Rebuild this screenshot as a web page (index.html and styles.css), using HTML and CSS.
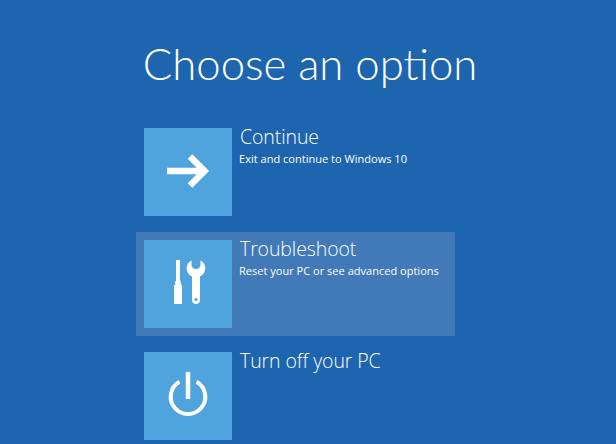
FILE: index.html
```html
<!DOCTYPE html>
<html lang="en">
<head>
<meta charset="utf-8">
<title>Choose an option</title>
<link rel="stylesheet" href="styles.css">
</head>
<body>
<main class="screen">
  <h1 class="heading">Choose an option</h1>
  <ul class="options">
    <li class="option">
      <span class="tile">
        <svg class="icon" viewBox="0 0 44 44" aria-hidden="true"><path d="M1 21H36M24 6.500L38.500 21L24 35.500" fill="none" stroke="#fff" stroke-width="6.500"/></svg>
      </span>
      <div class="text">
        <h2 class="name">Continue</h2>
        <p class="desc">Exit and continue to Windows 10</p>
      </div>
    </li>
    <li class="option option-active">
      <span class="tile">
        <svg class="icon" viewBox="0 2 44 44" aria-hidden="true"><path fill="#fff" d="M10 0H14V21H14.800V25H16V44H8V25H9.200V21H10Z"/><path fill="#fff" fill-rule="evenodd" d="M25.500 0.500V5C25.500 7 27.500 9 30 9C32.500 9 34.500 7 34.500 5V0.500C37.500 2 39.300 4.800 39.300 8C39.300 12 37 15 34 16.500V40C34 42.500 32.200 44 30 44C27.800 44 26 42.500 26 40V16.500C23 15 20.700 12 20.700 8C20.700 4.800 22.500 2 25.500 0.500ZM30 37.900A1.600 1.600 0 1 0 30 41.100A1.600 1.600 0 1 0 30 37.900Z"/></svg>
      </span>
      <div class="text">
        <h2 class="name">Troubleshoot</h2>
        <p class="desc">Reset your PC or see advanced options</p>
      </div>
    </li>
    <li class="option">
      <span class="tile">
        <svg class="icon" viewBox="0 2 44 44" aria-hidden="true"><path d="M22 0V27" fill="none" stroke="#fff" stroke-width="4.500"/><path d="M13.500 9.700A17.300 17.300 0 1 0 30.500 9.700" fill="none" stroke="#fff" stroke-width="4"/></svg>
      </span>
      <div class="text">
        <h2 class="name">Turn off your PC</h2>
      </div>
    </li>
  </ul>
</main>
</body>
</html>
```
FILE: styles.css
```css
html, body {
  margin: 0;
  height: 100%;
  overflow: hidden;
}

body {
  background: #1e65b0;
  color: #fff;
  font-family: "Open Sans", "Liberation Sans", sans-serif;
}

.screen {
  display: flex;
  flex-direction: column;
  align-items: center;
  height: 444px;
}

.heading {
  margin: 0 0 0 4px;
  padding-top: 33px;
  height: 120px;
  box-sizing: border-box;
  flex-shrink: 0;
  font-family: "Lato", "Open Sans", sans-serif;
  font-size: 43.700px;
  line-height: 60px;
  font-weight: 300;
  white-space: nowrap;
}

.options {
  list-style: none;
  margin: 0;
  padding: 0;
  width: 319px;
  margin-left: -25px;
  display: flex;
  flex-direction: column;
  gap: 8px;
}

.option {
  display: flex;
  gap: 8px;
  height: 104px;
  padding: 8px;
  box-sizing: border-box;
  flex-shrink: 0;
}

.option-active {
  background: #4179b9;
}

.tile {
  width: 88px;
  height: 88px;
  flex-shrink: 0;
  background: #4fa4dd;
  display: flex;
  align-items: center;
  justify-content: center;
}

.icon {
  width: 44px;
  height: 44px;
  display: block;
  overflow: visible;
}

.text {
  min-width: 0;
  margin-top: -1px;
}

.name {
  margin: 0;
  font-size: 19.500px;
  line-height: 20px;
  font-weight: 300;
  letter-spacing: -0.1px;
  white-space: nowrap;
}

.desc {
  margin: 4px 0 0 -1px;
  font-size: 11px;
  line-height: 16px;
  font-weight: 400;
  letter-spacing: 0.02px;
  white-space: nowrap;
}
```
